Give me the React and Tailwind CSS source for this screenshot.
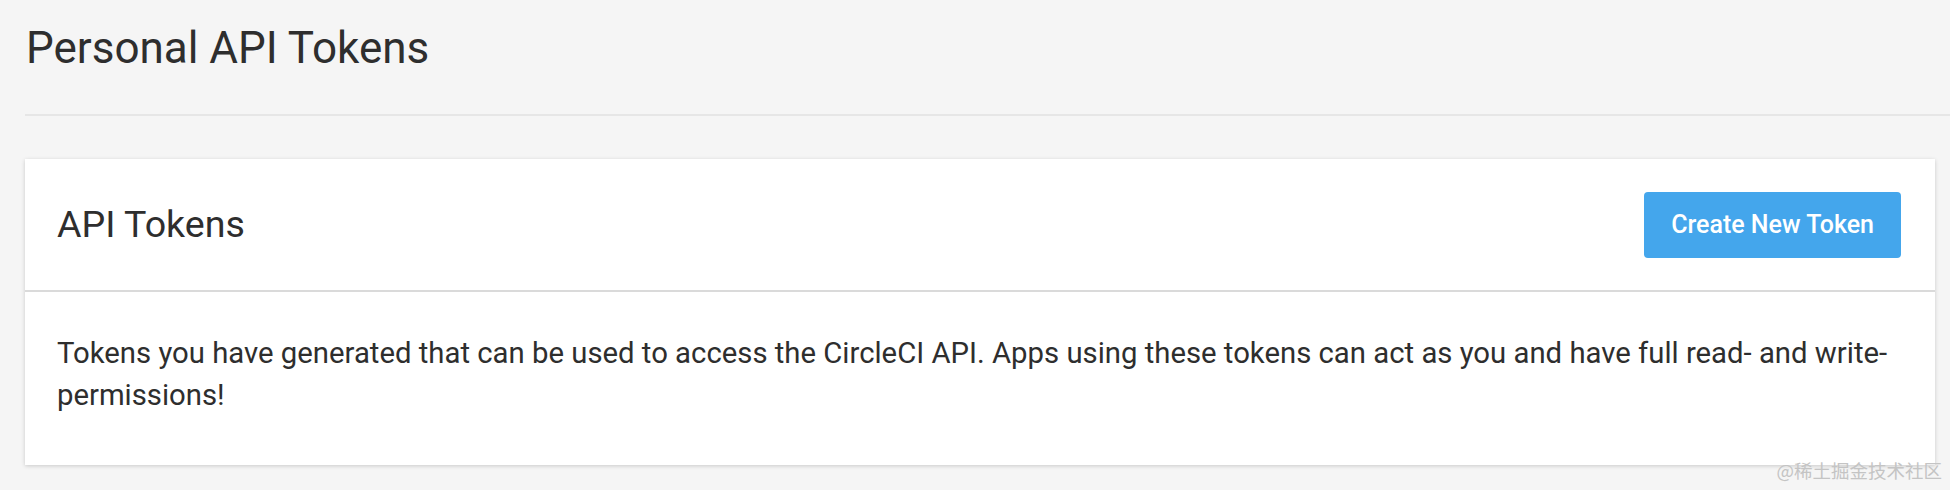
export default function App() {
  return (
    <div className="relative min-h-[490px] bg-[#f5f5f5] text-[#2e2e2e] font-['Roboto','Liberation_Sans',sans-serif]">
      <div className="pt-[22px]">
        <h1 className="pl-[26px] text-[44px] leading-[52px] font-normal">
          Personal API Tokens
        </h1>
        <div className="ml-[25px] mt-[40px] border-t-2 border-[#e6e6e6]" />
      </div>

      <div className="ml-[25px] mr-[15px] mt-[43px] bg-white shadow-[0_1px_4px_rgba(0,0,0,0.18)]">
        <div className="flex h-[133px] items-center justify-between border-b-2 border-[#dadada] pl-[32px] pr-[34px]">
          <h2 className="text-[37.6px] font-normal leading-none">API Tokens</h2>
          <button className="h-[66px] rounded-[4px] bg-[#44a6ec] px-[27px] text-[25px] font-medium text-white">
            Create New Token
          </button>
        </div>
        <div className="pl-[32px] pr-[28px] pt-[40px] pb-[49px]">
          <p className="text-[29.3px] leading-[42px]">
            Tokens you have generated that can be used to access the CircleCI API. Apps using these tokens can act as you and have full read- and write-permissions!
          </p>
        </div>
      </div>

      <span className="absolute right-[8px] bottom-[5px] text-[18.5px] text-[#c4c4c4] font-['Noto_Sans_CJK_SC',sans-serif]">
        @稀土掘金技术社区
      </span>
    </div>
  );
}
